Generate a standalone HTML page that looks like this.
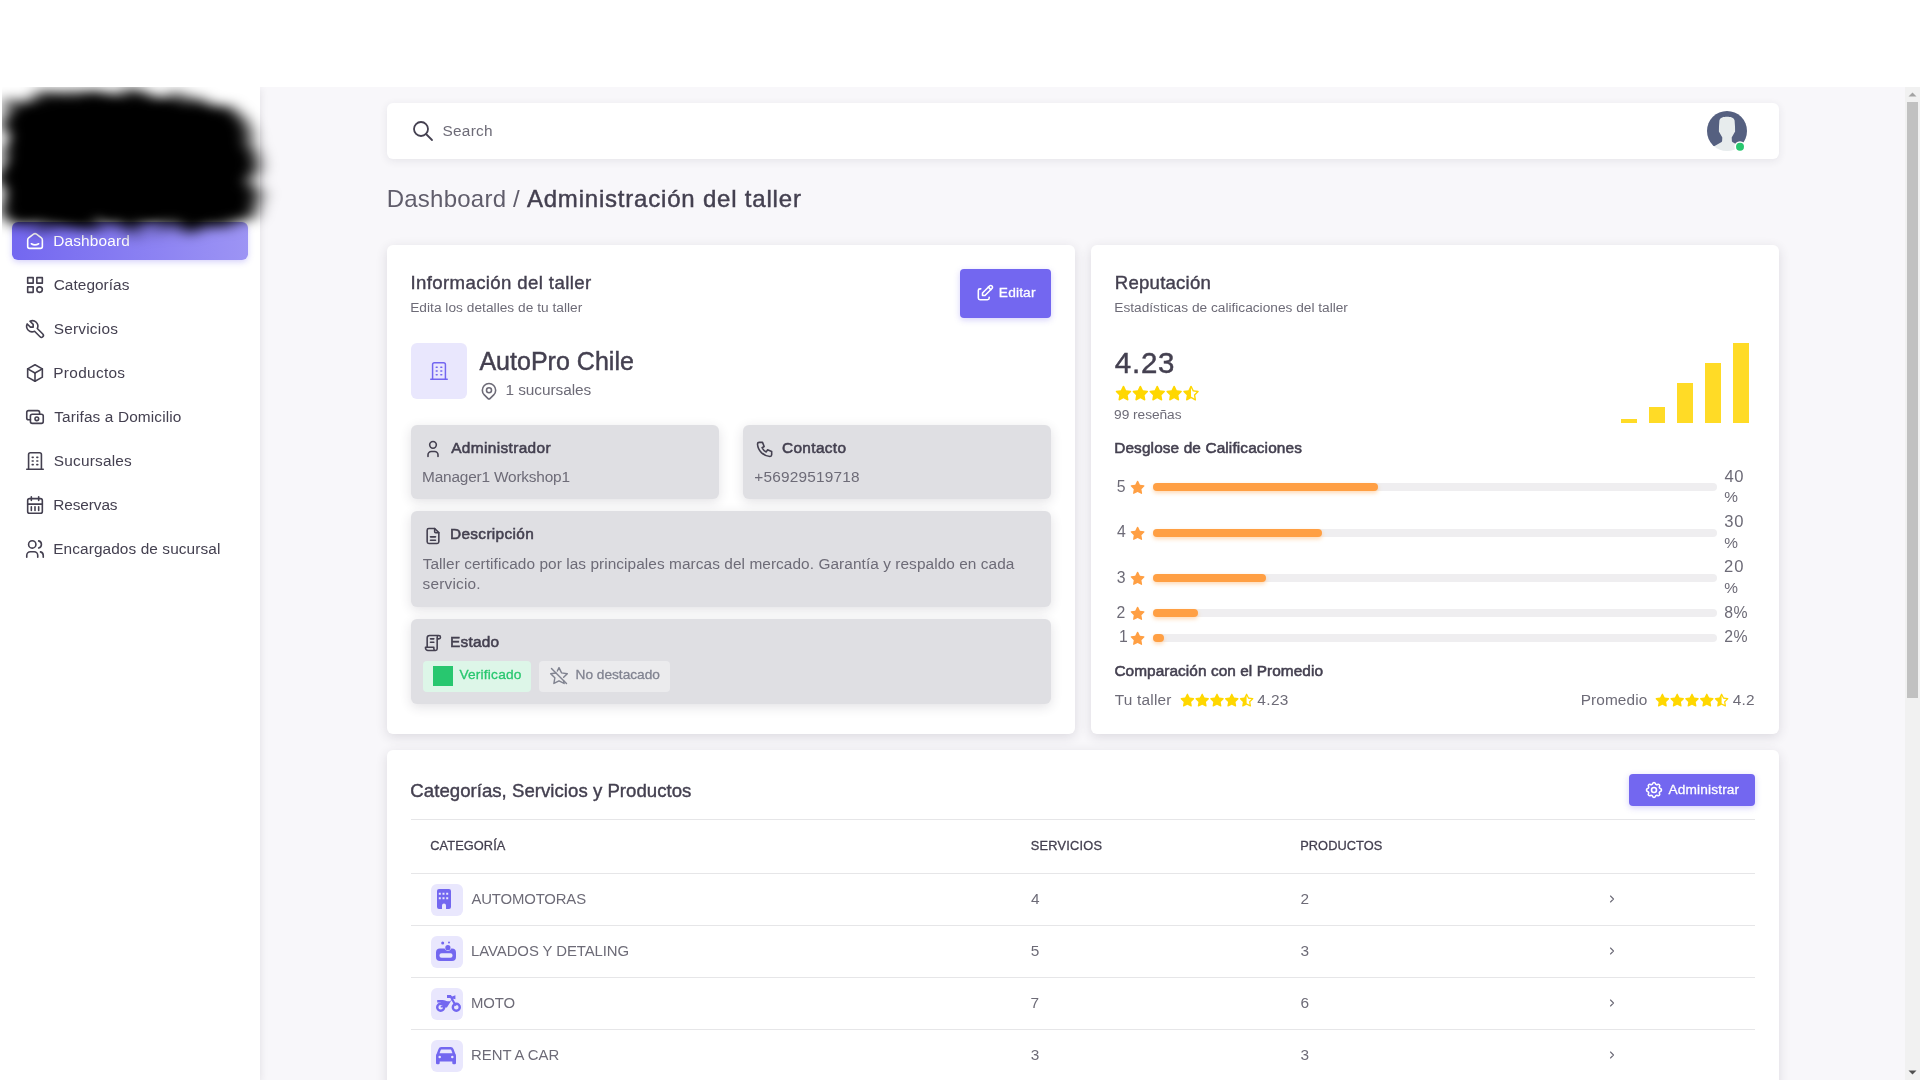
<!DOCTYPE html>
<html lang="es"><head><meta charset="utf-8"><title>Administración del taller</title>
<style>
html,body{margin:0;padding:0}
body{width:1920px;height:1080px;overflow:hidden;background:#fff;position:relative;font-family:"Liberation Sans", sans-serif;}
#app{position:absolute;left:0;top:0;width:1920px;height:1080px;overflow:hidden;will-change:transform}
#app div,#app svg{position:absolute}
.t{position:absolute;white-space:nowrap;color:#6d6b77}
svg{display:block;overflow:visible}
</style></head>
<body>
<div id="app">
<div style="left:260px;top:87px;width:1645px;height:993px;background:#f8f7fa;"></div>
<div style="left:0px;top:87px;width:260px;height:993px;background:#fff;box-shadow:0 2px 8px 0 rgba(47,43,61,.12);clip-path:inset(0 -12px 0 0);"></div>
<div style="left:1905px;top:87px;width:15px;height:993px;background:#f1f1f1;"></div>
<div style="left:1907px;top:102px;width:11px;height:596px;background:#c1c1c1;"></div>
<svg style="left:1905px;top:87px" width="15" height="15" viewBox="0 0 15 15"><path d="M3.500 9.500L7.500 5.500L11.500 9.500z" fill="#a3a3a3"/></svg>
<svg style="left:1905px;top:1065px" width="15" height="15" viewBox="0 0 15 15"><path d="M3.500 5.500L7.500 9.500L11.500 5.500z" fill="#505050"/></svg>
<div style="left:12px;top:222px;width:236px;height:38px;background:linear-gradient(270deg, rgba(115,103,240,.7) 0%, #7367f0 100%);border-radius:6px;box-shadow:0 2px 6px 0 rgba(115,103,240,.3);"></div>
<svg style="left:24px;top:230px" width="22" height="22" viewBox="0 0 24 24" fill="none" stroke="#fff" stroke-width="1.75" stroke-linecap="round" stroke-linejoin="round"><path d="M19 8.71l-5.333 -4.148a2.666 2.666 0 0 0 -3.274 0l-5.334 4.148a2.665 2.665 0 0 0 -1.029 2.105v7.2a2 2 0 0 0 2 2h12a2 2 0 0 0 2 -2v-7.2c0 -.823 -.38 -1.6 -1.03 -2.105"/><path d="M16 15c-2.21 1.333 -5.792 1.333 -8 0"/></svg>
<span class="t" style="left:53.24px;top:230px;line-height:21px;font-size:15.4px;color:#fff;letter-spacing:0.157px">Dashboard</span>
<svg style="left:24px;top:274px" width="22" height="22" viewBox="0 0 24 24" fill="none" stroke="#444050" stroke-width="1.75" stroke-linecap="round" stroke-linejoin="round"><path d="M4 4h6v6h-6z"/><path d="M14 4h6v6h-6z"/><path d="M4 14h6v6h-6z"/><path d="M14 17a3 3 0 1 0 6 0a3 3 0 1 0 -6 0"/></svg>
<span class="t" style="left:53.72px;top:274px;line-height:21px;font-size:15.4px;color:#444050;letter-spacing:0.038px">Categorías</span>
<svg style="left:24px;top:318px" width="22" height="22" viewBox="0 0 24 24" fill="none" stroke="#444050" stroke-width="1.75" stroke-linecap="round" stroke-linejoin="round"><path d="M7 10h3v-3l-3.500 -3.500a6 6 0 0 1 8 8l6 6a2 2 0 0 1 -3 3l-6 -6a6 6 0 0 1 -8 -8l3.500 3.500"/></svg>
<span class="t" style="left:53.8px;top:318px;line-height:21px;font-size:15.4px;color:#444050;letter-spacing:0.202px">Servicios</span>
<svg style="left:24px;top:362px" width="22" height="22" viewBox="0 0 24 24" fill="none" stroke="#444050" stroke-width="1.75" stroke-linecap="round" stroke-linejoin="round"><path d="M12 3l8 4.500l0 9l-8 4.500l-8 -4.500l0 -9l8 -4.500"/><path d="M12 12l8 -4.500"/><path d="M12 12l0 9"/><path d="M12 12l-8 -4.500"/></svg>
<span class="t" style="left:53.24px;top:362px;line-height:21px;font-size:15.4px;color:#444050;letter-spacing:0.315px">Productos</span>
<svg style="left:24px;top:406px" width="22" height="22" viewBox="0 0 24 24" fill="none" stroke="#444050" stroke-width="1.75" stroke-linecap="round" stroke-linejoin="round"><path d="M7 11a2 2 0 0 1 2 -2h10a2 2 0 0 1 2 2v6a2 2 0 0 1 -2 2h-10a2 2 0 0 1 -2 -2z"/><path d="M12 14a2 2 0 1 0 4 0a2 2 0 1 0 -4 0"/><path d="M17 9v-2a2 2 0 0 0 -2 -2h-10a2 2 0 0 0 -2 2v6a2 2 0 0 0 2 2h2"/></svg>
<span class="t" style="left:54.15px;top:406px;line-height:21px;font-size:15.4px;color:#444050;letter-spacing:0.134px">Tarifas a Domicilio</span>
<svg style="left:24px;top:450px" width="22" height="22" viewBox="0 0 24 24" fill="none" stroke="#444050" stroke-width="1.75" stroke-linecap="round" stroke-linejoin="round"><path d="M3 21l18 0"/><path d="M9 8l1 0"/><path d="M9 12l1 0"/><path d="M9 16l1 0"/><path d="M14 8l1 0"/><path d="M14 12l1 0"/><path d="M14 16l1 0"/><path d="M5 21v-16a2 2 0 0 1 2 -2h10a2 2 0 0 1 2 2v16"/></svg>
<span class="t" style="left:53.8px;top:450px;line-height:21px;font-size:15.4px;color:#444050;letter-spacing:0.202px">Sucursales</span>
<svg style="left:24px;top:494px" width="22" height="22" viewBox="0 0 24 24" fill="none" stroke="#444050" stroke-width="1.75" stroke-linecap="round" stroke-linejoin="round"><path d="M4 7a2 2 0 0 1 2 -2h12a2 2 0 0 1 2 2v12a2 2 0 0 1 -2 2h-12a2 2 0 0 1 -2 -2z"/><path d="M16 3v4"/><path d="M8 3v4"/><path d="M4 11h16"/><path d="M8 14v4"/><path d="M12 14v4"/><path d="M16 14v4"/></svg>
<span class="t" style="left:53.24px;top:494px;line-height:21px;font-size:15.4px;color:#444050;letter-spacing:-0.099px">Reservas</span>
<svg style="left:24px;top:538px" width="22" height="22" viewBox="0 0 24 24" fill="none" stroke="#444050" stroke-width="1.75" stroke-linecap="round" stroke-linejoin="round"><path d="M5 7a4 4 0 1 0 8 0a4 4 0 1 0 -8 0"/><path d="M3 21v-2a4 4 0 0 1 4 -4h4a4 4 0 0 1 4 4v2"/><path d="M16 3.130a4 4 0 0 1 0 7.750"/><path d="M21 21v-2a4 4 0 0 0 -3 -3.850"/></svg>
<span class="t" style="left:53.24px;top:538px;line-height:21px;font-size:15.4px;color:#444050;letter-spacing:0.094px">Encargados de sucursal</span>
<svg style="left:0;top:87px" width="300" height="175" viewBox="0 0 300 175">
<defs><filter id="bf" x="-20%" y="-30%" width="140%" height="160%">
<feTurbulence type="fractalNoise" baseFrequency="0.050" numOctaves="4" seed="11" result="n"/>
<feDisplacementMap in="SourceGraphic" in2="n" scale="44" xChannelSelector="R" yChannelSelector="G" result="d"/>
<feGaussianBlur in="d" stdDeviation="9 6"/></filter>
<filter id="bg" x="-20%" y="-30%" width="140%" height="160%">
<feTurbulence type="fractalNoise" baseFrequency="0.030" numOctaves="3" seed="3" result="n"/>
<feDisplacementMap in="SourceGraphic" in2="n" scale="24" xChannelSelector="G" yChannelSelector="R" result="d"/>
<feGaussianBlur in="d" stdDeviation="7 5"/></filter>
<clipPath id="bc"><rect x="2" y="0" width="298" height="175"/></clipPath></defs>
<g clip-path="url(#bc)"><path d="M4 48Q4 8 50 8L180 8Q236 12 254 62L255 106Q253 139 216 140L34 140Q4 139 4 114Z" fill="#000" filter="url(#bf)"/>
<path d="M15 52Q15 22 54 22L168 22Q212 26 228 62L231 102Q229 127 202 130L42 130Q15 128 15 106Z" fill="#000" filter="url(#bg)"/></g></svg>
<div style="left:386.75px;top:103px;width:1392.25px;height:56px;background:#fff;border-radius:6px;box-shadow:0 2px 8px 0 rgba(47,43,61,.09);"></div>
<svg style="left:411px;top:118.85px" width="24" height="24" viewBox="0 0 24 24" fill="none" stroke="#444050" stroke-width="1.8" stroke-linecap="round" stroke-linejoin="round"><path d="M3 10a7 7 0 1 0 14 0a7 7 0 1 0 -14 0"/><path d="M21 21l-6 -6"/></svg>
<span class="t" style="left:442.5px;top:120px;line-height:21px;font-size:15.4px;letter-spacing:0.247px">Search</span>
<svg style="left:1707px;top:111px" width="40" height="40" viewBox="0 0 40 40">
<defs><mask id="av"><circle cx="20" cy="20" r="20" fill="#fff"/></mask></defs>
<g mask="url(#av)"><rect width="40" height="40" fill="#556080"/>
<path d="M20 5.700C16.500 5.700 13.200 6.300 12.400 9.500L12 15.200L11.900 20.500L15.300 26.600L15.100 30.200Q15 30.900 14.200 31.300L1 38.800L0 40H40L39 38.800L25.800 31.300Q25 30.900 24.900 30.200L24.700 26.600L28.100 20.500L28 15.200L27.600 9.500C26.800 6.300 23.500 5.700 20 5.700Z" fill="#e7eced"/></g>
<circle cx="33" cy="35.800" r="5.600" fill="#fff"/><circle cx="33" cy="35.800" r="4" fill="#28c76f"/></svg>
<span class="t" style="left:386.73px;top:183px;line-height:31px;font-size:24px;color:#605d6b;letter-spacing:0.232px">Dashboard /</span>
<span class="t" style="left:526.88px;top:183px;line-height:31px;font-size:24px;color:#444050;-webkit-text-stroke:0.45px #444050;letter-spacing:0.801px">Administración del taller</span>
<div style="left:386.75px;top:244.5px;width:688.25px;height:489.5px;background:#fff;border-radius:6px;box-shadow:0 3px 12px 0 rgba(47,43,61,.14);"></div>
<span class="t" style="left:410.48px;top:270px;line-height:25px;font-size:18.6px;color:#444050;-webkit-text-stroke:0.4px #444050;letter-spacing:0.382px">Información del taller</span>
<span class="t" style="left:410.18px;top:298px;line-height:19px;font-size:13.7px;letter-spacing:0.032px">Edita los detalles de tu taller</span>
<div style="left:960px;top:269px;width:91px;height:49px;background:#7367f0;border-radius:4px;box-shadow:0 2px 6px 0 rgba(115,103,240,.3);"></div>
<svg style="left:974.8px;top:283.1px" width="20" height="20" viewBox="0 0 24 24" fill="none" stroke="#fff" stroke-width="1.9" stroke-linecap="round" stroke-linejoin="round"><path d="M7 7h-1a2 2 0 0 0 -2 2v9a2 2 0 0 0 2 2h9a2 2 0 0 0 2 -2v-1"/><path d="M20.385 6.585a2.100 2.100 0 0 0 -2.970 -2.970l-8.415 8.385v3h3l8.385 -8.415z"/><path d="M16 5l3 3"/></svg>
<span class="t" style="left:998.83px;top:283px;line-height:19px;font-size:13.7px;color:#fff;-webkit-text-stroke:0.3px #fff;letter-spacing:0.177px">Editar</span>
<div style="left:410.75px;top:343px;width:56px;height:56px;background:#e9e7fd;border-radius:6px;"></div>
<svg style="left:428px;top:359.9px" width="22" height="22" viewBox="0 0 24 24" fill="none" stroke="#7367f0" stroke-width="1.6" stroke-linecap="round" stroke-linejoin="round"><path d="M3 21l18 0"/><path d="M9 8l1 0"/><path d="M9 12l1 0"/><path d="M9 16l1 0"/><path d="M14 8l1 0"/><path d="M14 12l1 0"/><path d="M14 16l1 0"/><path d="M5 21v-16a2 2 0 0 1 2 -2h10a2 2 0 0 1 2 2v16"/></svg>
<span class="t" style="left:479.38px;top:345px;line-height:32px;font-size:25px;color:#444050;-webkit-text-stroke:0.45px #444050;letter-spacing:0.022px">AutoPro Chile</span>
<svg style="left:478.85px;top:380.9px" width="20" height="20" viewBox="0 0 24 24" fill="none" stroke="#6d6b77" stroke-width="1.9" stroke-linecap="round" stroke-linejoin="round"><path d="M9 11a3 3 0 1 0 6 0a3 3 0 0 0 -6 0"/><path d="M17.657 16.657l-4.243 4.243a2 2 0 0 1 -2.827 0l-4.244 -4.243a8 8 0 1 1 11.314 0z"/></svg>
<span class="t" style="left:505.53px;top:379px;line-height:21px;font-size:15.4px;letter-spacing:-0.062px">1 sucursales</span>
<div style="left:411px;top:425px;width:308px;height:73.6px;background:#dfdfe3;border-radius:6px;box-shadow:0 3px 12px 0 rgba(47,43,61,.14);"></div>
<svg style="left:423px;top:439px" width="20" height="20" viewBox="0 0 24 24" fill="none" stroke="#444050" stroke-width="1.9" stroke-linecap="round" stroke-linejoin="round"><path d="M8 7a4 4 0 1 0 8 0a4 4 0 0 0 -8 0"/><path d="M6 21v-2a4 4 0 0 1 4 -4h4a4 4 0 0 1 4 4v2"/></svg>
<span class="t" style="left:451.24px;top:437px;line-height:21px;font-size:15.4px;color:#444050;-webkit-text-stroke:0.55px #444050;letter-spacing:0.365px">Administrador</span>
<span class="t" style="left:422.04px;top:466px;line-height:21px;font-size:15.4px;letter-spacing:-0.185px">Manager1 Workshop1</span>
<div style="left:743px;top:425px;width:308px;height:73.6px;background:#dfdfe3;border-radius:6px;box-shadow:0 3px 12px 0 rgba(47,43,61,.14);"></div>
<svg style="left:755px;top:439px" width="20" height="20" viewBox="0 0 24 24" fill="none" stroke="#444050" stroke-width="1.9" stroke-linecap="round" stroke-linejoin="round"><path d="M5 4h4l2 5l-2.500 1.500a11 11 0 0 0 5 5l1.500 -2.500l5 2v4a2 2 0 0 1 -2 2a16 16 0 0 1 -15 -15a2 2 0 0 1 2 -2"/></svg>
<span class="t" style="left:781.99px;top:437px;line-height:21px;font-size:15.4px;color:#444050;-webkit-text-stroke:0.55px #444050;letter-spacing:0.353px">Contacto</span>
<span class="t" style="left:754.25px;top:466px;line-height:21px;font-size:15.4px;letter-spacing:0.188px">+56929519718</span>
<div style="left:411px;top:511.4px;width:640px;height:95.2px;background:#dfdfe3;border-radius:6px;box-shadow:0 3px 12px 0 rgba(47,43,61,.14);"></div>
<svg style="left:423px;top:525.6px" width="20" height="20" viewBox="0 0 24 24" fill="none" stroke="#444050" stroke-width="1.9" stroke-linecap="round" stroke-linejoin="round"><path d="M14 3v4a1 1 0 0 0 1 1h4"/><path d="M17 21h-10a2 2 0 0 1 -2 -2v-14a2 2 0 0 1 2 -2h7l5 5v11a2 2 0 0 1 -2 2z"/><path d="M9 17h6"/><path d="M9 13h6"/></svg>
<span class="t" style="left:450.01px;top:523px;line-height:21px;font-size:15.4px;color:#444050;-webkit-text-stroke:0.55px #444050;letter-spacing:0.331px">Descripción</span>
<span class="t" style="left:422.65px;top:553px;line-height:21px;font-size:15.4px;letter-spacing:0.068px">Taller certificado por las principales marcas del mercado. Garantía y respaldo en cada</span>
<span class="t" style="left:422.57px;top:573px;line-height:21px;font-size:15.4px;letter-spacing:0.198px">servicio.</span>
<div style="left:411px;top:619.4px;width:640px;height:84.3px;background:#dfdfe3;border-radius:6px;box-shadow:0 3px 12px 0 rgba(47,43,61,.14);"></div>
<svg style="left:422.8px;top:632.8px" width="20" height="20" viewBox="0 0 24 24" fill="none" stroke="#444050" stroke-width="1.9" stroke-linecap="round" stroke-linejoin="round"><path d="M15 21h-9a3 3 0 0 1 -3 -3v-1h10v2a2 2 0 0 0 4 0v-14a2 2 0 1 1 2 2h-2m2 -4h-11a3 3 0 0 0 -3 3v11"/><path d="M9 7l4 0"/><path d="M9 11l4 0"/></svg>
<span class="t" style="left:449.91px;top:631px;line-height:21px;font-size:15.4px;color:#444050;-webkit-text-stroke:0.55px #444050;letter-spacing:0.268px">Estado</span>
<div style="left:423px;top:661px;width:108px;height:31px;background:#ddf6e8;border-radius:4px;"></div>
<div style="left:433px;top:666px;width:20px;height:20px;background:#28c76f;"></div>
<span class="t" style="left:459.39px;top:665px;line-height:19px;font-size:13.7px;color:#28c76f;-webkit-text-stroke:0.3px #28c76f;letter-spacing:0.214px">Verificado</span>
<div style="left:539px;top:661px;width:131px;height:31px;background:#ebebed;border-radius:4px;"></div>
<svg style="left:548.8px;top:665.6px" width="20" height="20" viewBox="0 0 24 24" fill="none" stroke="#808390" stroke-width="1.7" stroke-linecap="round" stroke-linejoin="round"><path d="M3 3l18 18"/><path d="M10.012 6.016l1.981 -4.014l3.086 6.253l6.900 1l-4.421 4.304m.012 4.010l.588 3.426l-6.158 -3.245l-6.172 3.245l1.179 -6.873l-5 -4.867l6.327 -.917"/></svg>
<span class="t" style="left:575.53px;top:665px;line-height:19px;font-size:13.7px;color:#808390;-webkit-text-stroke:0.3px #808390;letter-spacing:-0.006px">No destacado</span>
<div style="left:1091.25px;top:244.5px;width:687.75px;height:489.5px;background:#fff;border-radius:6px;box-shadow:0 3px 12px 0 rgba(47,43,61,.14);"></div>
<span class="t" style="left:1114.87px;top:270px;line-height:25px;font-size:18.6px;color:#444050;-webkit-text-stroke:0.4px #444050;letter-spacing:0.206px">Reputación</span>
<span class="t" style="left:1114.28px;top:298px;line-height:19px;font-size:13.7px;letter-spacing:0.002px">Estadísticas de calificaciones del taller</span>
<span class="t" style="left:1114.75px;top:344px;line-height:37px;font-size:29.5px;color:#444050;-webkit-text-stroke:0.45px #444050;letter-spacing:0.767px">4.23</span>
<svg style="left:1114.5px;top:385.3px" width="84.5" height="16.9" viewBox="0 0 120 24" fill="#ffd700"><g transform="translate(0 0)"><path d="M8.243 7.340l-6.380 .925l-.113 .023a1 1 0 0 0 -.440 1.684l4.622 4.499l-1.090 6.355l-.013 .110a1 1 0 0 0 1.464 .944l5.706 -3l5.693 3l.100 .046a1 1 0 0 0 1.352 -1.100l-1.091 -6.355l4.624 -4.500l.078 -.085a1 1 0 0 0 -.633 -1.620l-6.380 -.926l-2.852 -5.780a1 1 0 0 0 -1.794 0l-2.853 5.780z"/></g><g transform="translate(24 0)"><path d="M8.243 7.340l-6.380 .925l-.113 .023a1 1 0 0 0 -.440 1.684l4.622 4.499l-1.090 6.355l-.013 .110a1 1 0 0 0 1.464 .944l5.706 -3l5.693 3l.100 .046a1 1 0 0 0 1.352 -1.100l-1.091 -6.355l4.624 -4.500l.078 -.085a1 1 0 0 0 -.633 -1.620l-6.380 -.926l-2.852 -5.780a1 1 0 0 0 -1.794 0l-2.853 5.780z"/></g><g transform="translate(48 0)"><path d="M8.243 7.340l-6.380 .925l-.113 .023a1 1 0 0 0 -.440 1.684l4.622 4.499l-1.090 6.355l-.013 .110a1 1 0 0 0 1.464 .944l5.706 -3l5.693 3l.100 .046a1 1 0 0 0 1.352 -1.100l-1.091 -6.355l4.624 -4.500l.078 -.085a1 1 0 0 0 -.633 -1.620l-6.380 -.926l-2.852 -5.780a1 1 0 0 0 -1.794 0l-2.853 5.780z"/></g><g transform="translate(72 0)"><path d="M8.243 7.340l-6.380 .925l-.113 .023a1 1 0 0 0 -.440 1.684l4.622 4.499l-1.090 6.355l-.013 .110a1 1 0 0 0 1.464 .944l5.706 -3l5.693 3l.100 .046a1 1 0 0 0 1.352 -1.100l-1.091 -6.355l4.624 -4.500l.078 -.085a1 1 0 0 0 -.633 -1.620l-6.380 -.926l-2.852 -5.780a1 1 0 0 0 -1.794 0l-2.853 5.780z"/></g><g transform="translate(96 0)"><path d="M12 1a.993 .993 0 0 1 .823 .443l.067 .116l2.852 5.781l6.380 .925c.741 .108 1.080 .940 .703 1.526l-.070 .095l-.078 .086l-4.624 4.499l1.090 6.355a1.001 1.001 0 0 1 -1.249 1.135l-.101 -.035l-.101 -.046l-5.693 -3l-5.706 3c-.105 .055 -.212 .090 -.320 .106l-.106 .010a1.003 1.003 0 0 1 -1.038 -1.060l.013 -.110l1.090 -6.355l-4.623 -4.500a1.001 1.001 0 0 1 .328 -1.647l.113 -.036l.114 -.023l6.379 -.925l2.853 -5.780a.968 .968 0 0 1 .904 -.560zm0 3.274v12.476a1 1 0 0 1 .239 .029l.115 .036l.112 .050l4.363 2.299l-.836 -4.873a1 1 0 0 1 .136 -.696l.070 -.099l.082 -.090l3.546 -3.453l-4.891 -.708a1 1 0 0 1 -.620 -.344l-.073 -.097l-.060 -.106l-2.183 -4.424z"/></g></svg>
<span class="t" style="left:1114.11px;top:405px;line-height:19px;font-size:13.7px;letter-spacing:-0.033px">99 reseñas</span>
<div style="left:1620.5px;top:419px;width:16.7px;height:4px;background:#ffdb26;"></div>
<div style="left:1648.5px;top:407px;width:16.7px;height:16px;background:#ffdb26;"></div>
<div style="left:1676.6px;top:383px;width:16.7px;height:40px;background:#ffdb26;"></div>
<div style="left:1704.6px;top:363px;width:16.7px;height:60px;background:#ffdb26;"></div>
<div style="left:1732.6px;top:343px;width:16.7px;height:80px;background:#ffdb26;"></div>
<span class="t" style="left:1114.21px;top:437px;line-height:21px;font-size:15.4px;color:#444050;-webkit-text-stroke:0.55px #444050;letter-spacing:0.115px">Desglose de Calificaciones</span>
<span class="t" style="left:1116.77px;top:476px;line-height:21px;font-size:15.8px;">5</span>
<svg style="left:1129.8px;top:480.4px" width="15.2" height="15.2" viewBox="0 0 24 24" fill="#ff9f43"><path d="M8.243 7.340l-6.380 .925l-.113 .023a1 1 0 0 0 -.440 1.684l4.622 4.499l-1.090 6.355l-.013 .110a1 1 0 0 0 1.464 .944l5.706 -3l5.693 3l.100 .046a1 1 0 0 0 1.352 -1.100l-1.091 -6.355l4.624 -4.500l.078 -.085a1 1 0 0 0 -.633 -1.620l-6.380 -.926l-2.852 -5.780a1 1 0 0 0 -1.794 0l-2.853 5.780z"/></svg>
<div style="left:1152.75px;top:483px;width:564px;height:8px;background:#efeef0;border-radius:4px;"></div>
<div style="left:1152.75px;top:483px;width:225.6px;height:8px;background:#ff9f43;border-radius:4px;box-shadow:0 2px 4px 0 rgba(255,159,67,.4);"></div>
<span class="t" style="left:1724.42px;top:465px;line-height:23px;font-size:16.6px;letter-spacing:0.661px">40</span>
<span class="t" style="left:1724.25px;top:486px;line-height:21px;font-size:15.4px;">%</span>
<span class="t" style="left:1117.04px;top:521px;line-height:21px;font-size:15.8px;">4</span>
<svg style="left:1129.8px;top:526.3px" width="15.2" height="15.2" viewBox="0 0 24 24" fill="#ff9f43"><path d="M8.243 7.340l-6.380 .925l-.113 .023a1 1 0 0 0 -.440 1.684l4.622 4.499l-1.090 6.355l-.013 .110a1 1 0 0 0 1.464 .944l5.706 -3l5.693 3l.100 .046a1 1 0 0 0 1.352 -1.100l-1.091 -6.355l4.624 -4.500l.078 -.085a1 1 0 0 0 -.633 -1.620l-6.380 -.926l-2.852 -5.780a1 1 0 0 0 -1.794 0l-2.853 5.780z"/></svg>
<div style="left:1152.75px;top:528.9px;width:564px;height:8px;background:#efeef0;border-radius:4px;"></div>
<div style="left:1152.75px;top:528.9px;width:169.2px;height:8px;background:#ff9f43;border-radius:4px;box-shadow:0 2px 4px 0 rgba(255,159,67,.4);"></div>
<span class="t" style="left:1724.17px;top:510px;line-height:23px;font-size:16.6px;letter-spacing:0.912px">30</span>
<span class="t" style="left:1724.25px;top:532px;line-height:21px;font-size:15.4px;">%</span>
<span class="t" style="left:1116.8px;top:567px;line-height:21px;font-size:15.8px;">3</span>
<svg style="left:1129.8px;top:571.3px" width="15.2" height="15.2" viewBox="0 0 24 24" fill="#ff9f43"><path d="M8.243 7.340l-6.380 .925l-.113 .023a1 1 0 0 0 -.440 1.684l4.622 4.499l-1.090 6.355l-.013 .110a1 1 0 0 0 1.464 .944l5.706 -3l5.693 3l.100 .046a1 1 0 0 0 1.352 -1.100l-1.091 -6.355l4.624 -4.500l.078 -.085a1 1 0 0 0 -.633 -1.620l-6.380 -.926l-2.852 -5.780a1 1 0 0 0 -1.794 0l-2.853 5.780z"/></svg>
<div style="left:1152.75px;top:573.9px;width:564px;height:8px;background:#efeef0;border-radius:4px;"></div>
<div style="left:1152.75px;top:573.9px;width:112.8px;height:8px;background:#ff9f43;border-radius:4px;box-shadow:0 2px 4px 0 rgba(255,159,67,.4);"></div>
<span class="t" style="left:1723.97px;top:555px;line-height:23px;font-size:16.6px;letter-spacing:1.000px">20</span>
<span class="t" style="left:1724.25px;top:577px;line-height:21px;font-size:15.4px;">%</span>
<span class="t" style="left:1116.61px;top:602px;line-height:21px;font-size:15.8px;">2</span>
<svg style="left:1129.8px;top:606.4px" width="15.2" height="15.2" viewBox="0 0 24 24" fill="#ff9f43"><path d="M8.243 7.340l-6.380 .925l-.113 .023a1 1 0 0 0 -.440 1.684l4.622 4.499l-1.090 6.355l-.013 .110a1 1 0 0 0 1.464 .944l5.706 -3l5.693 3l.100 .046a1 1 0 0 0 1.352 -1.100l-1.091 -6.355l4.624 -4.500l.078 -.085a1 1 0 0 0 -.633 -1.620l-6.380 -.926l-2.852 -5.780a1 1 0 0 0 -1.794 0l-2.853 5.780z"/></svg>
<div style="left:1152.75px;top:609px;width:564px;height:8px;background:#efeef0;border-radius:4px;"></div>
<div style="left:1152.75px;top:609px;width:45.1px;height:8px;background:#ff9f43;border-radius:4px;box-shadow:0 2px 4px 0 rgba(255,159,67,.4);"></div>
<span class="t" style="left:1724.31px;top:602px;line-height:21px;font-size:15.8px;letter-spacing:0.406px">8%</span>
<span class="t" style="left:1119.1px;top:626px;line-height:21px;font-size:15.8px;">1</span>
<svg style="left:1129.8px;top:631.4px" width="15.2" height="15.2" viewBox="0 0 24 24" fill="#ff9f43"><path d="M8.243 7.340l-6.380 .925l-.113 .023a1 1 0 0 0 -.440 1.684l4.622 4.499l-1.090 6.355l-.013 .110a1 1 0 0 0 1.464 .944l5.706 -3l5.693 3l.100 .046a1 1 0 0 0 1.352 -1.100l-1.091 -6.355l4.624 -4.500l.078 -.085a1 1 0 0 0 -.633 -1.620l-6.380 -.926l-2.852 -5.780a1 1 0 0 0 -1.794 0l-2.853 5.780z"/></svg>
<div style="left:1152.75px;top:634px;width:564px;height:8px;background:#efeef0;border-radius:4px;"></div>
<div style="left:1152.75px;top:634px;width:11.3px;height:8px;background:#ff9f43;border-radius:4px;box-shadow:0 2px 4px 0 rgba(255,159,67,.4);"></div>
<span class="t" style="left:1724.21px;top:626px;line-height:21px;font-size:15.8px;letter-spacing:0.514px">2%</span>
<span class="t" style="left:1114.39px;top:660px;line-height:21px;font-size:15.4px;color:#444050;-webkit-text-stroke:0.55px #444050;letter-spacing:0.060px">Comparación con el Promedio</span>
<span class="t" style="left:1114.75px;top:689px;line-height:21px;font-size:15.4px;letter-spacing:0.209px">Tu taller</span>
<svg style="left:1179.5px;top:692.5px" width="74.0" height="14.8" viewBox="0 0 120 24" fill="#ffd700"><g transform="translate(0 0)"><path d="M8.243 7.340l-6.380 .925l-.113 .023a1 1 0 0 0 -.440 1.684l4.622 4.499l-1.090 6.355l-.013 .110a1 1 0 0 0 1.464 .944l5.706 -3l5.693 3l.100 .046a1 1 0 0 0 1.352 -1.100l-1.091 -6.355l4.624 -4.500l.078 -.085a1 1 0 0 0 -.633 -1.620l-6.380 -.926l-2.852 -5.780a1 1 0 0 0 -1.794 0l-2.853 5.780z"/></g><g transform="translate(24 0)"><path d="M8.243 7.340l-6.380 .925l-.113 .023a1 1 0 0 0 -.440 1.684l4.622 4.499l-1.090 6.355l-.013 .110a1 1 0 0 0 1.464 .944l5.706 -3l5.693 3l.100 .046a1 1 0 0 0 1.352 -1.100l-1.091 -6.355l4.624 -4.500l.078 -.085a1 1 0 0 0 -.633 -1.620l-6.380 -.926l-2.852 -5.780a1 1 0 0 0 -1.794 0l-2.853 5.780z"/></g><g transform="translate(48 0)"><path d="M8.243 7.340l-6.380 .925l-.113 .023a1 1 0 0 0 -.440 1.684l4.622 4.499l-1.090 6.355l-.013 .110a1 1 0 0 0 1.464 .944l5.706 -3l5.693 3l.100 .046a1 1 0 0 0 1.352 -1.100l-1.091 -6.355l4.624 -4.500l.078 -.085a1 1 0 0 0 -.633 -1.620l-6.380 -.926l-2.852 -5.780a1 1 0 0 0 -1.794 0l-2.853 5.780z"/></g><g transform="translate(72 0)"><path d="M8.243 7.340l-6.380 .925l-.113 .023a1 1 0 0 0 -.440 1.684l4.622 4.499l-1.090 6.355l-.013 .110a1 1 0 0 0 1.464 .944l5.706 -3l5.693 3l.100 .046a1 1 0 0 0 1.352 -1.100l-1.091 -6.355l4.624 -4.500l.078 -.085a1 1 0 0 0 -.633 -1.620l-6.380 -.926l-2.852 -5.780a1 1 0 0 0 -1.794 0l-2.853 5.780z"/></g><g transform="translate(96 0)"><path d="M12 1a.993 .993 0 0 1 .823 .443l.067 .116l2.852 5.781l6.380 .925c.741 .108 1.080 .940 .703 1.526l-.070 .095l-.078 .086l-4.624 4.499l1.090 6.355a1.001 1.001 0 0 1 -1.249 1.135l-.101 -.035l-.101 -.046l-5.693 -3l-5.706 3c-.105 .055 -.212 .090 -.320 .106l-.106 .010a1.003 1.003 0 0 1 -1.038 -1.060l.013 -.110l1.090 -6.355l-4.623 -4.500a1.001 1.001 0 0 1 .328 -1.647l.113 -.036l.114 -.023l6.379 -.925l2.853 -5.780a.968 .968 0 0 1 .904 -.560zm0 3.274v12.476a1 1 0 0 1 .239 .029l.115 .036l.112 .050l4.363 2.299l-.836 -4.873a1 1 0 0 1 .136 -.696l.070 -.099l.082 -.090l3.546 -3.453l-4.891 -.708a1 1 0 0 1 -.620 -.344l-.073 -.097l-.060 -.106l-2.183 -4.424z"/></g></svg>
<span class="t" style="left:1257.35px;top:689px;line-height:21px;font-size:15.4px;letter-spacing:0.354px">4.23</span>
<span class="t" style="left:1580.64px;top:689px;line-height:21px;font-size:15.4px;letter-spacing:0.105px">Promedio</span>
<svg style="left:1655.2px;top:692.5px" width="74.0" height="14.8" viewBox="0 0 120 24" fill="#ffd700"><g transform="translate(0 0)"><path d="M8.243 7.340l-6.380 .925l-.113 .023a1 1 0 0 0 -.440 1.684l4.622 4.499l-1.090 6.355l-.013 .110a1 1 0 0 0 1.464 .944l5.706 -3l5.693 3l.100 .046a1 1 0 0 0 1.352 -1.100l-1.091 -6.355l4.624 -4.500l.078 -.085a1 1 0 0 0 -.633 -1.620l-6.380 -.926l-2.852 -5.780a1 1 0 0 0 -1.794 0l-2.853 5.780z"/></g><g transform="translate(24 0)"><path d="M8.243 7.340l-6.380 .925l-.113 .023a1 1 0 0 0 -.440 1.684l4.622 4.499l-1.090 6.355l-.013 .110a1 1 0 0 0 1.464 .944l5.706 -3l5.693 3l.100 .046a1 1 0 0 0 1.352 -1.100l-1.091 -6.355l4.624 -4.500l.078 -.085a1 1 0 0 0 -.633 -1.620l-6.380 -.926l-2.852 -5.780a1 1 0 0 0 -1.794 0l-2.853 5.780z"/></g><g transform="translate(48 0)"><path d="M8.243 7.340l-6.380 .925l-.113 .023a1 1 0 0 0 -.440 1.684l4.622 4.499l-1.090 6.355l-.013 .110a1 1 0 0 0 1.464 .944l5.706 -3l5.693 3l.100 .046a1 1 0 0 0 1.352 -1.100l-1.091 -6.355l4.624 -4.500l.078 -.085a1 1 0 0 0 -.633 -1.620l-6.380 -.926l-2.852 -5.780a1 1 0 0 0 -1.794 0l-2.853 5.780z"/></g><g transform="translate(72 0)"><path d="M8.243 7.340l-6.380 .925l-.113 .023a1 1 0 0 0 -.440 1.684l4.622 4.499l-1.090 6.355l-.013 .110a1 1 0 0 0 1.464 .944l5.706 -3l5.693 3l.100 .046a1 1 0 0 0 1.352 -1.100l-1.091 -6.355l4.624 -4.500l.078 -.085a1 1 0 0 0 -.633 -1.620l-6.380 -.926l-2.852 -5.780a1 1 0 0 0 -1.794 0l-2.853 5.780z"/></g><g transform="translate(96 0)"><path d="M12 1a.993 .993 0 0 1 .823 .443l.067 .116l2.852 5.781l6.380 .925c.741 .108 1.080 .940 .703 1.526l-.070 .095l-.078 .086l-4.624 4.499l1.090 6.355a1.001 1.001 0 0 1 -1.249 1.135l-.101 -.035l-.101 -.046l-5.693 -3l-5.706 3c-.105 .055 -.212 .090 -.320 .106l-.106 .010a1.003 1.003 0 0 1 -1.038 -1.060l.013 -.110l1.090 -6.355l-4.623 -4.500a1.001 1.001 0 0 1 .328 -1.647l.113 -.036l.114 -.023l6.379 -.925l2.853 -5.780a.968 .968 0 0 1 .904 -.560zm0 3.274v12.476a1 1 0 0 1 .239 .029l.115 .036l.112 .050l4.363 2.299l-.836 -4.873a1 1 0 0 1 .136 -.696l.070 -.099l.082 -.090l3.546 -3.453l-4.891 -.708a1 1 0 0 1 -.620 -.344l-.073 -.097l-.060 -.106l-2.183 -4.424z"/></g></svg>
<span class="t" style="left:1732.65px;top:689px;line-height:21px;font-size:15.4px;letter-spacing:0.311px">4.2</span>
<div style="left:386.75px;top:750px;width:1392.25px;height:340px;background:#fff;border-radius:6px;box-shadow:0 3px 12px 0 rgba(47,43,61,.14);"></div>
<span class="t" style="left:410.36px;top:778px;line-height:25px;font-size:18.6px;color:#444050;-webkit-text-stroke:0.4px #444050;letter-spacing:0.030px">Categorías, Servicios y Productos</span>
<div style="left:1629px;top:774px;width:126px;height:32px;background:#7367f0;border-radius:4px;box-shadow:0 2px 6px 0 rgba(115,103,240,.3);"></div>
<svg style="left:1643.8px;top:779.9px" width="20" height="20" viewBox="0 0 24 24" fill="none" stroke="#fff" stroke-width="1.9" stroke-linecap="round" stroke-linejoin="round"><path d="M10.325 4.317c.426 -1.756 2.924 -1.756 3.350 0a1.724 1.724 0 0 0 2.573 1.066c1.543 -.940 3.310 .826 2.370 2.370a1.724 1.724 0 0 0 1.065 2.572c1.756 .426 1.756 2.924 0 3.350a1.724 1.724 0 0 0 -1.066 2.573c.940 1.543 -.826 3.310 -2.370 2.370a1.724 1.724 0 0 0 -2.572 1.065c-.426 1.756 -2.924 1.756 -3.350 0a1.724 1.724 0 0 0 -2.573 -1.066c-1.543 .940 -3.310 -.826 -2.370 -2.370a1.724 1.724 0 0 0 -1.065 -2.572c-1.756 -.426 -1.756 -2.924 0 -3.350a1.724 1.724 0 0 0 1.066 -2.573c-.940 -1.543 .826 -3.310 2.370 -2.370c1 .608 2.296 .070 2.572 -1.065z"/><path d="M9 12a3 3 0 1 0 6 0a3 3 0 0 0 -6 0"/></svg>
<span class="t" style="left:1668.52px;top:780px;line-height:19px;font-size:13.7px;color:#fff;-webkit-text-stroke:0.3px #fff;letter-spacing:0.144px">Administrar</span>
<div style="left:410.75px;top:819px;width:1344.25px;height:1px;background:#e6e6e8;"></div>
<div style="left:410.75px;top:873px;width:1344.25px;height:1px;background:#e6e6e8;"></div>
<div style="left:410.75px;top:925px;width:1344.25px;height:1px;background:#e6e6e8;"></div>
<div style="left:410.75px;top:977px;width:1344.25px;height:1px;background:#e6e6e8;"></div>
<div style="left:410.75px;top:1029px;width:1344.25px;height:1px;background:#e6e6e8;"></div>
<span class="t" style="left:430.29px;top:836px;line-height:19px;font-size:12.8px;color:#444050;-webkit-text-stroke:0.28px #444050;letter-spacing:0.084px">CATEGORÍA</span>
<span class="t" style="left:1030.76px;top:836px;line-height:19px;font-size:12.8px;color:#444050;-webkit-text-stroke:0.28px #444050;letter-spacing:0.215px">SERVICIOS</span>
<span class="t" style="left:1300.19px;top:836px;line-height:19px;font-size:12.8px;color:#444050;-webkit-text-stroke:0.28px #444050;letter-spacing:0.078px">PRODUCTOS</span>
<div style="left:431px;top:884.0px;width:32px;height:32px;background:#e9e7fd;border-radius:6px;"></div>
<svg style="left:436px;top:889.2px" width="15" height="20.5" viewBox="0 0 15 20.5" fill="#7367f0"><path fill-rule="evenodd" d="M3 0h10a2 2 0 0 1 2 2v16a2 2 0 0 1 -2 2h-3v-3.500a2 2 0 0 0 -4 0v3.500h-3a2 2 0 0 1 -2 -2v-16a2 2 0 0 1 2 -2zM2.800 3.800v2h2v-2zM6.500 3.800v2h2v-2zM10.200 3.800v2h2v-2zM2.800 8.300v2h2v-2zM6.500 8.300v2h2v-2zM10.200 8.300v2h2v-2z"/></svg>
<span class="t" style="left:471.47px;top:889px;line-height:20px;font-size:14.9px;letter-spacing:-0.150px">AUTOMOTORAS</span>
<span class="t" style="left:1030.95px;top:888px;line-height:21px;font-size:15.4px;">4</span>
<span class="t" style="left:1300.43px;top:888px;line-height:21px;font-size:15.4px;">2</span>
<svg style="left:1606.4px;top:893.4px" width="12" height="12" viewBox="0 0 24 24" fill="none" stroke="#6d6b77" stroke-width="2.2" stroke-linecap="round" stroke-linejoin="round"><path d="M9 6l6 6l-6 6"/></svg>
<div style="left:431px;top:936.1px;width:32px;height:32px;background:#e9e7fd;border-radius:6px;"></div>
<svg style="left:436px;top:941px" width="20.2" height="20.4" viewBox="0 0 20.2 20.4" fill="#7367f0"><circle cx="6.700" cy="1.900" r="1.500"/><circle cx="13" cy="1.400" r="1"/><circle cx="11.900" cy="6.700" r="2.600"/><path fill-rule="evenodd" d="M4 7.600h4.600a3.600 3.600 0 0 0 6.700 0h.700a4 4 0 0 1 4 4v4.400a4 4 0 0 1 -4 4h-12a4 4 0 0 1 -4 -4v-4.400a4 4 0 0 1 4 -4zM5.600 12.300a2.200 2.200 0 0 0 0 4.400h8.800a2.200 2.200 0 0 0 0 -4.400z"/></svg>
<span class="t" style="left:471.08px;top:941px;line-height:20px;font-size:14.9px;letter-spacing:-0.067px">LAVADOS Y DETALING</span>
<span class="t" style="left:1030.68px;top:940px;line-height:21px;font-size:15.4px;">5</span>
<span class="t" style="left:1300.61px;top:940px;line-height:21px;font-size:15.4px;">3</span>
<svg style="left:1606.4px;top:945.4px" width="12" height="12" viewBox="0 0 24 24" fill="none" stroke="#6d6b77" stroke-width="2.2" stroke-linecap="round" stroke-linejoin="round"><path d="M9 6l6 6l-6 6"/></svg>
<div style="left:431px;top:988.2px;width:32px;height:32px;background:#e9e7fd;border-radius:6px;"></div>
<svg style="left:436px;top:994.4px" width="25" height="18" viewBox="0 0 25 18" fill="#7367f0"><path fill-rule="evenodd" d="M4.700 8.600a4.700 4.700 0 1 0 0 9.400a4.700 4.700 0 1 0 0 -9.400zM4.700 11a2.300 2.300 0 1 1 0 4.600a2.300 2.300 0 1 1 0 -4.600z"/><path fill-rule="evenodd" d="M20.300 8.600a4.700 4.700 0 1 0 0 9.400a4.700 4.700 0 1 0 0 -9.400zM20.300 11a2.300 2.300 0 1 1 0 4.600a2.300 2.300 0 1 1 0 -4.600z"/><path d="M11 1h3.800l1.300 1.600l3.300 -1.300v4l-2.300 -.500l3.500 6.500l-1.800 1l-3.300 -6l-4.600 7.200h-6.200v-1.700h2.300l-2.500 -3.400h-3.300v-2.300h5.500c2 0 3.200 1.200 4.700 1.200h2.800l1 -1.600l-.900 -1.700h-3.300z"/></svg>
<span class="t" style="left:471.08px;top:993px;line-height:20px;font-size:14.9px;letter-spacing:-0.157px">MOTO</span>
<span class="t" style="left:1030.51px;top:992px;line-height:21px;font-size:15.4px;">7</span>
<span class="t" style="left:1300.42px;top:992px;line-height:21px;font-size:15.4px;">6</span>
<svg style="left:1606.4px;top:997.4px" width="12" height="12" viewBox="0 0 24 24" fill="none" stroke="#6d6b77" stroke-width="2.2" stroke-linecap="round" stroke-linejoin="round"><path d="M9 6l6 6l-6 6"/></svg>
<div style="left:431px;top:1040.3px;width:32px;height:32px;background:#e9e7fd;border-radius:6px;"></div>
<svg style="left:436px;top:1047.1px" width="20.2" height="17.2" viewBox="0 0 20.2 17.2" fill="#7367f0"><path fill-rule="evenodd" d="M5.300 0h9.400a3 3 0 0 1 2.800 2l1.700 4.600a3 3 0 0 1 .800 2.100v7.300a1.200 1.200 0 0 1 -1.200 1.200h-1.300a1.200 1.200 0 0 1 -1.200 -1.200v-1.500h-12.600v1.500a1.200 1.200 0 0 1 -1.200 1.200h-1.300a1.200 1.200 0 0 1 -1.200 -1.200v-7.300a3 3 0 0 1 .800 -2.100l1.700 -4.600a3 3 0 0 1 2.800 -2zM5.300 2.500a.600 .600 0 0 0 -.560 .400l-1.200 3.300h12.920l-1.200 -3.300a.600 .600 0 0 0 -.560 -.400zM3.700 8.800a1.250 1.250 0 1 0 0 2.500a1.250 1.250 0 1 0 0 -2.500zM16.300 8.800a1.250 1.250 0 1 0 0 2.500a1.250 1.250 0 1 0 0 -2.500z"/></svg>
<span class="t" style="left:471.08px;top:1045px;line-height:20px;font-size:14.9px;letter-spacing:-0.019px">RENT A CAR</span>
<span class="t" style="left:1030.71px;top:1044px;line-height:21px;font-size:15.4px;">3</span>
<span class="t" style="left:1300.61px;top:1044px;line-height:21px;font-size:15.4px;">3</span>
<svg style="left:1606.4px;top:1049.4px" width="12" height="12" viewBox="0 0 24 24" fill="none" stroke="#6d6b77" stroke-width="2.2" stroke-linecap="round" stroke-linejoin="round"><path d="M9 6l6 6l-6 6"/></svg>
</div>
</body></html>
